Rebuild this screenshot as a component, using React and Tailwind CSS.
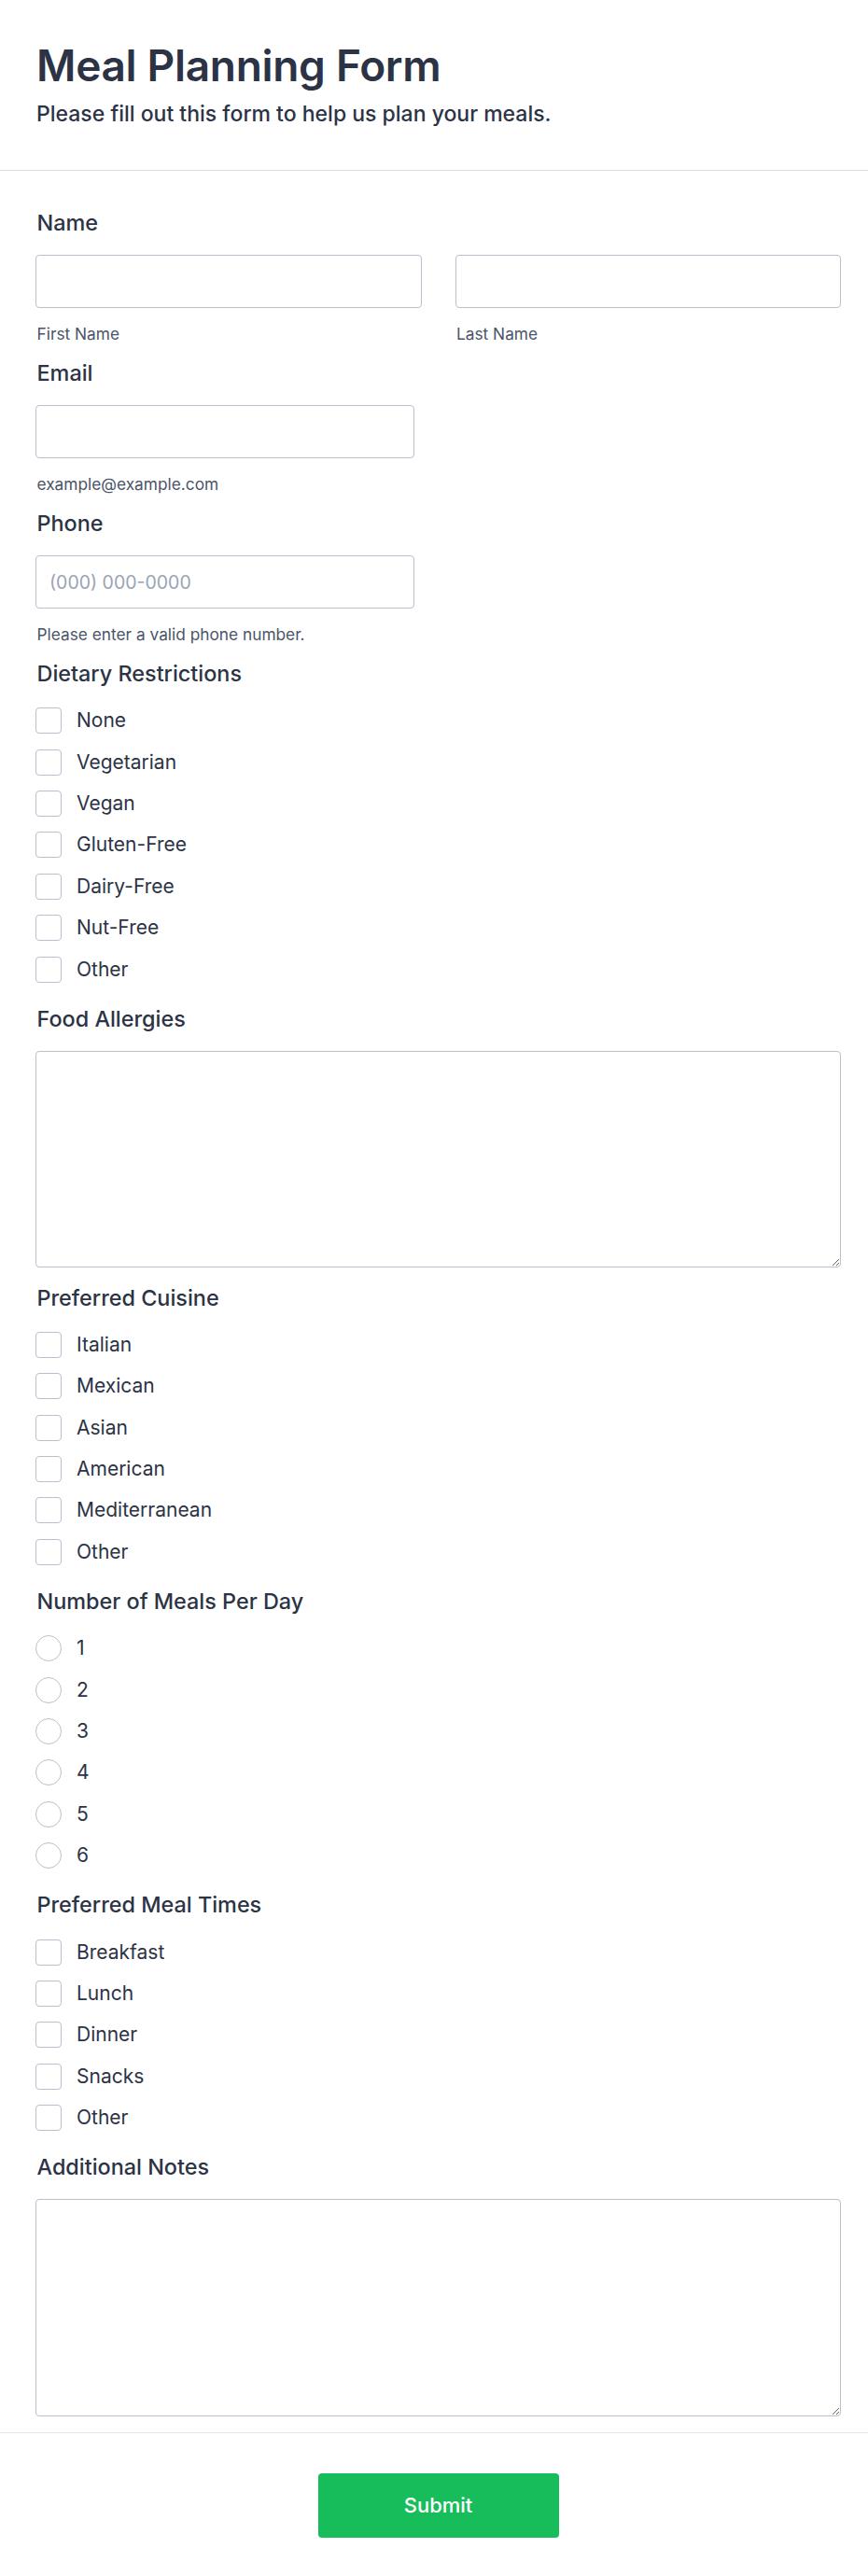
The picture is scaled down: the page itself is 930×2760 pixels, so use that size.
import React from "react";

function Label({ children }) {
  return (
    <div className="pl-[1.5px] text-[23.4px] leading-[30px] font-medium text-[#2c3345]">
      {children}
    </div>
  );
}

function Sub({ children }) {
  return (
    <div className="mt-[16px] pl-[1.5px] text-[17.3px] leading-[24px] text-[#4b5468]">
      {children}
    </div>
  );
}

function TextInput({ placeholder, className = "" }) {
  return (
    <input
      type="text"
      placeholder={placeholder}
      className={
        "block h-[57px] rounded-[4px] border border-[#b9c0cd] bg-white px-[14px] text-[19.5px] text-[#2c3345] placeholder:text-[#9aa3b5] outline-none " +
        className
      }
    />
  );
}

function OptionList({ items, radio = false }) {
  return (
    <div className="mt-[13px] mb-[1px] flex flex-col">
      {items.map((it) => (
        <div key={it} className="h-[44.4px] flex items-center gap-[16px]">
          <span
            className={
              "w-[28px] h-[28px] border border-[#b9c0cd] bg-white shrink-0 " +
              (radio ? "rounded-full" : "rounded-[4px]")
            }
          />
          <span className="text-[21px] leading-[28px] text-[#2c3345]">{it}</span>
        </div>
      ))}
    </div>
  );
}

export default function App() {
  return (
    <div className="min-h-screen bg-white font-['Inter','Noto_Sans',sans-serif] text-[#2c3345]">
      <header className="pl-[39px] pr-[29px] pt-[46px] pb-[46px] border-b border-[#d8dce4]">
        <h1 className="text-[46px] leading-[48px] font-semibold tracking-[-0.3px] text-[#2c3345]">
          Meal Planning Form
        </h1>
        <p className="mt-[14px] text-[23px] leading-[28px] font-medium text-[#2c3345]">
          Please fill out this form to help us plan your meals.
        </p>
      </header>

      <main className="pl-[38px] pr-[29px] pt-[41px] pb-[17px] flex flex-col gap-[15px]">
        <div className="flex flex-col">
          <Label>Name</Label>
          <div className="mt-[19px] grid grid-cols-2 gap-[36px]">
            <div>
              <TextInput className="w-full" />
              <Sub>First Name</Sub>
            </div>
            <div>
              <TextInput className="w-full" />
              <Sub>Last Name</Sub>
            </div>
          </div>
        </div>

        <div className="flex flex-col">
          <Label>Email</Label>
          <div className="mt-[19px]">
            <TextInput className="w-[406px] h-[56px]" />
          </div>
          <Sub>example@example.com</Sub>
        </div>

        <div className="flex flex-col">
          <Label>Phone</Label>
          <div className="mt-[19px]">
            <TextInput className="w-[406px] h-[56px]" placeholder="(000) 000-0000" />
          </div>
          <Sub>Please enter a valid phone number.</Sub>
        </div>

        <div className="flex flex-col">
          <Label>Dietary Restrictions</Label>
          <OptionList
            items={["None", "Vegetarian", "Vegan", "Gluten-Free", "Dairy-Free", "Nut-Free", "Other"]}
          />
        </div>

        <div className="flex flex-col">
          <Label>Food Allergies</Label>
          <textarea className="block w-full h-[232px] mt-[19px] mb-[3px] rounded-[4px] border border-[#b9c0cd] bg-white p-[14px] text-[20px] outline-none" />
        </div>

        <div className="flex flex-col">
          <Label>Preferred Cuisine</Label>
          <OptionList items={["Italian", "Mexican", "Asian", "American", "Mediterranean", "Other"]} />
        </div>

        <div className="flex flex-col">
          <Label>Number of Meals Per Day</Label>
          <OptionList radio items={["1", "2", "3", "4", "5", "6"]} />
        </div>

        <div className="flex flex-col">
          <Label>Preferred Meal Times</Label>
          <OptionList items={["Breakfast", "Lunch", "Dinner", "Snacks", "Other"]} />
        </div>

        <div className="flex flex-col">
          <Label>Additional Notes</Label>
          <textarea className="block w-full h-[233px] mt-[19px] rounded-[4px] border border-[#b9c0cd] bg-white p-[14px] text-[20px] outline-none" />
        </div>
      </main>

      <footer className="border-t border-[#dfe3ea] pl-[38px] pr-[29px] py-[43px] flex justify-center">
        <button className="w-[258px] h-[69px] rounded-[4px] bg-[#18bd5b] text-white text-[22px] font-medium">
          Submit
        </button>
      </footer>
    </div>
  );
}
